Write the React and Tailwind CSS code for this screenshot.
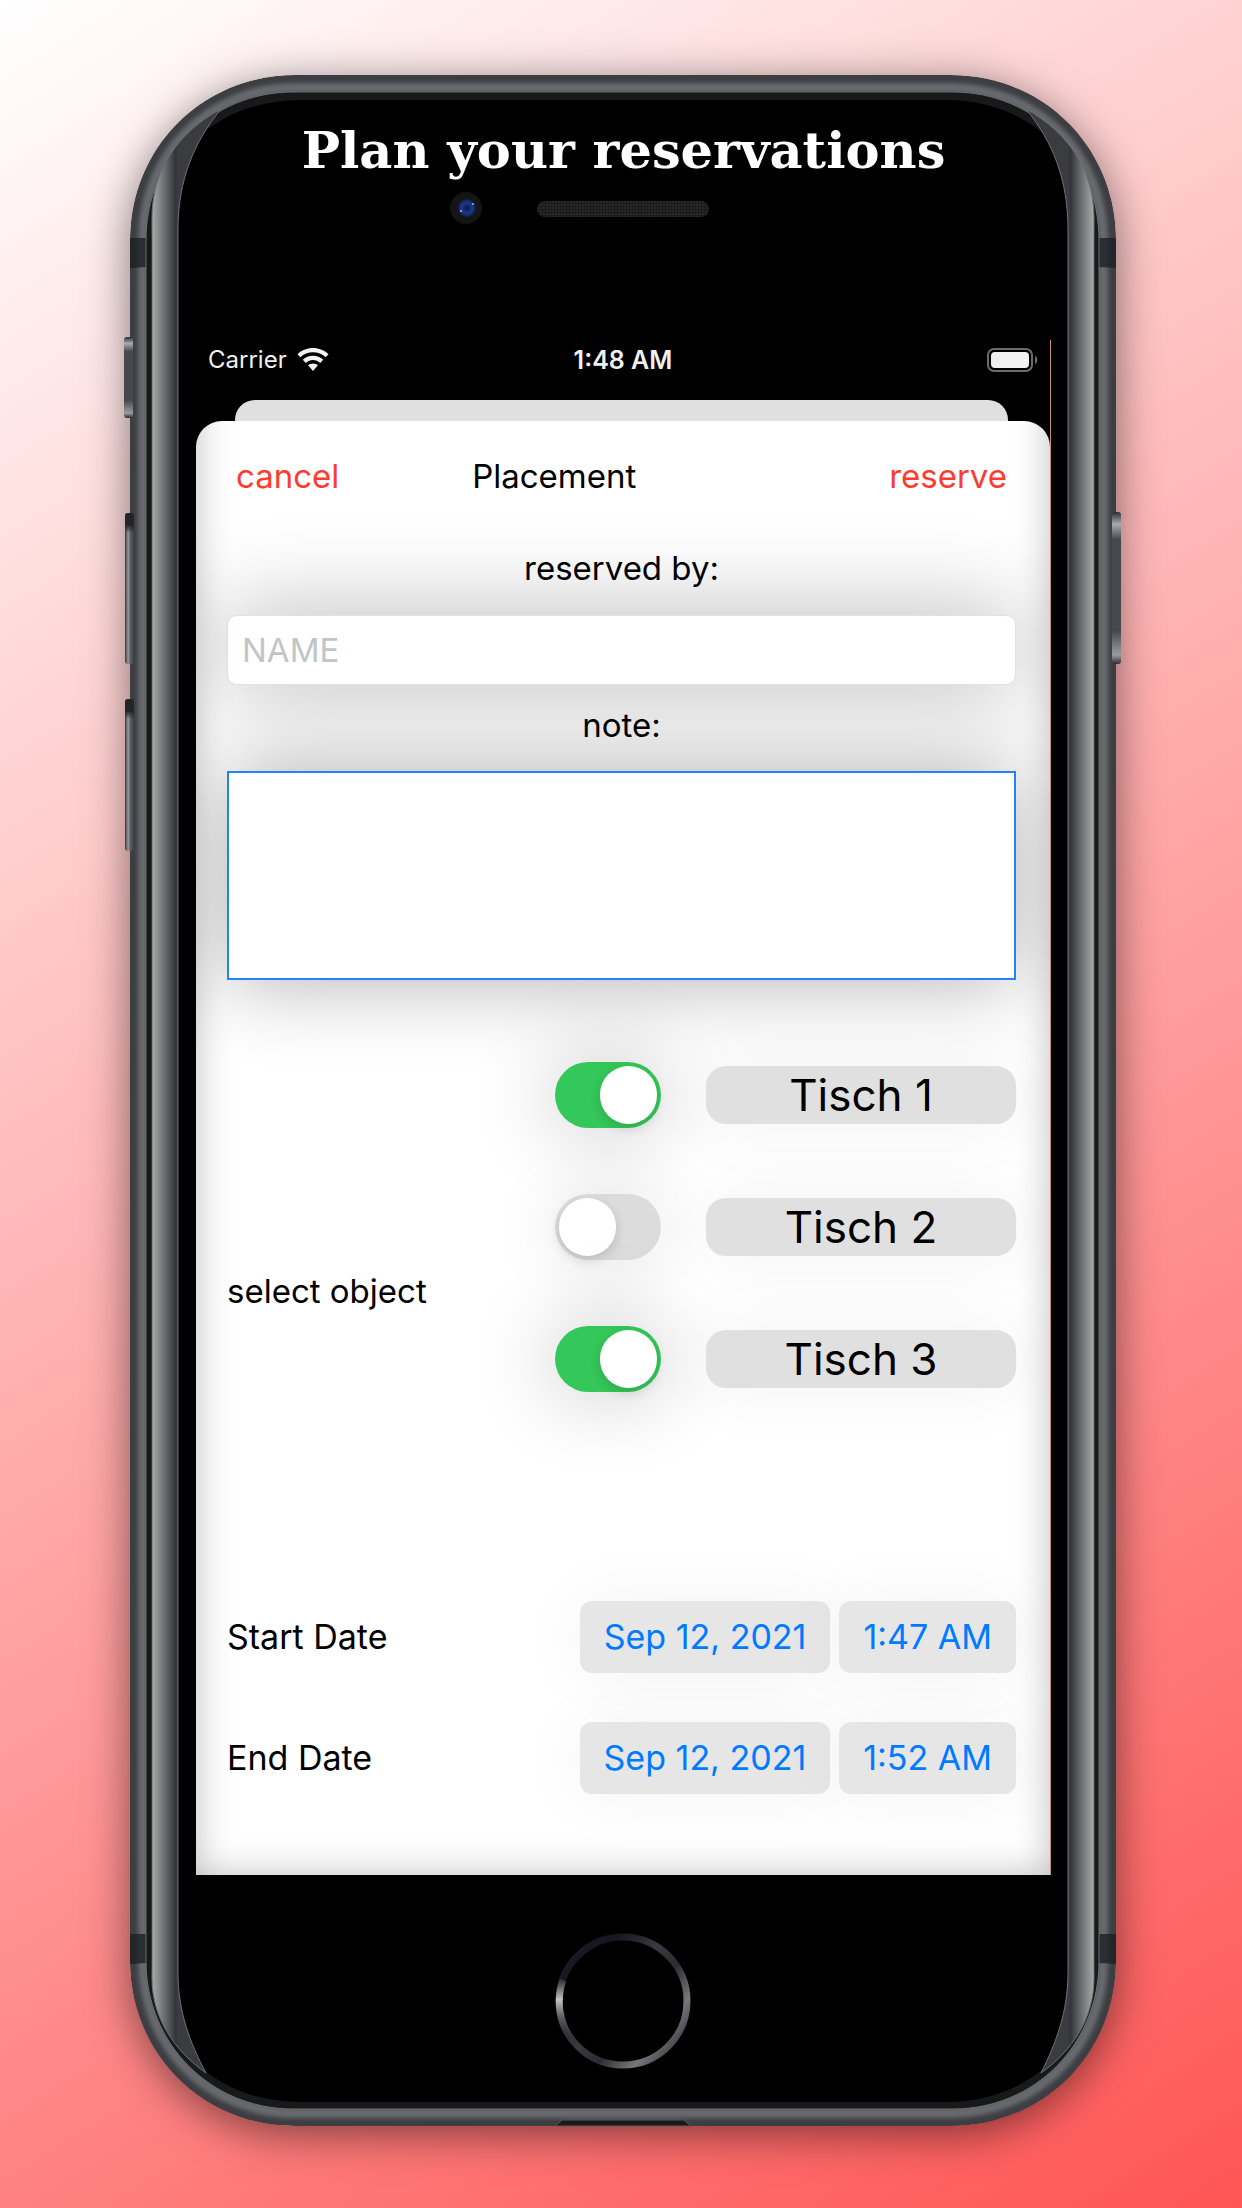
import React, { useState } from "react";

function PhoneBody() {
  return (
    <svg
      className="absolute inset-0 h-full w-full overflow-visible"
      viewBox="130 75 986 2051"
      preserveAspectRatio="none"
      aria-hidden="true"
    >
      <defs>
        <linearGradient id="glassL" x1="152" x2="178" y1="0" y2="0" gradientUnits="userSpaceOnUse">
          <stop offset="0" stopColor="#a9a9a9" />
          <stop offset="0.25" stopColor="#8a8b8b" />
          <stop offset="0.6" stopColor="#5c5e62" />
          <stop offset="0.9" stopColor="#33353a" />
          <stop offset="1" stopColor="#3a3c40" />
        </linearGradient>
        <linearGradient id="glassR" x1="1094" x2="1068" y1="0" y2="0" gradientUnits="userSpaceOnUse">
          <stop offset="0" stopColor="#a9a9a9" />
          <stop offset="0.25" stopColor="#8a8b8b" />
          <stop offset="0.6" stopColor="#5c5e62" />
          <stop offset="0.9" stopColor="#33353a" />
          <stop offset="1" stopColor="#3a3c40" />
        </linearGradient>
        <linearGradient id="key" x1="0" x2="1" y1="0" y2="0">
          <stop offset="0" stopColor="#35373c" />
          <stop offset="0.35" stopColor="#97999b" />
          <stop offset="0.6" stopColor="#5c6066" />
          <stop offset="1" stopColor="#3a3d42" />
        </linearGradient>
        <linearGradient id="keyCap" x1="0" x2="0" y1="0" y2="1">
          <stop offset="0" stopColor="#232529" />
          <stop offset="0.6" stopColor="#232529" />
          <stop offset="1" stopColor="#232529" stopOpacity="0" />
        </linearGradient>
        <linearGradient id="mute" x1="0" x2="0" y1="0" y2="1">
          <stop offset="0" stopColor="#2a2c30" />
          <stop offset="0.08" stopColor="#a9abae" />
          <stop offset="0.18" stopColor="#45484d" />
          <stop offset="0.78" stopColor="#45484d" />
          <stop offset="0.94" stopColor="#9a9ca0" />
          <stop offset="1" stopColor="#2a2c30" />
        </linearGradient>
        <linearGradient id="ring" x1="0" x2="1" y1="0.1" y2="0.9">
          <stop offset="0" stopColor="#1b1c2a" />
          <stop offset="0.22" stopColor="#15161e" />
          <stop offset="0.45" stopColor="#3a3b40" />
          <stop offset="0.62" stopColor="#2c2d32" />
          <stop offset="0.8" stopColor="#76777b" />
          <stop offset="1" stopColor="#2a2b30" />
        </linearGradient>
        <linearGradient id="ringGlow" x1="0" x2="0" y1="1976" y2="2044" gradientUnits="userSpaceOnUse">
          <stop offset="0" stopColor="#b8b8b8" stopOpacity="0" />
          <stop offset="0.35" stopColor="#c4c4c4" />
          <stop offset="1" stopColor="#33343a" stopOpacity="0" />
        </linearGradient>
        <radialGradient id="lens">
          <stop offset="0" stopColor="#0a1450" />
          <stop offset="0.6" stopColor="#1c3a86" />
          <stop offset="1" stopColor="#101c44" />
        </radialGradient>
        <pattern id="mesh" width="3" height="3" patternUnits="userSpaceOnUse">
          <rect width="3" height="3" fill="#1b1b1b" />
          <rect width="2" height="2" fill="#292929" />
        </pattern>
        <filter id="soft" x="-5%" y="-5%" width="110%" height="110%">
          <feGaussianBlur stdDeviation="2" />
        </filter>
        <clipPath id="bodyClip">
          <path d="M130 240C130 148 202 75 295 75H951C1044 75 1116 148 1116 240V1961C1116 2053 1044 2126 951 2126H295C202 2126 130 2053 130 1961Z" />
        </clipPath>
      </defs>

      <g clipPath="url(#bodyClip)">
        <path
          fill="#3c3e42"
          d="M130 240C130 148 202 75 295 75H951C1044 75 1116 148 1116 240V1961C1116 2053 1044 2126 951 2126H295C202 2126 130 2053 130 1961Z"
        />
        <path
          fill="none"
          stroke="#68696d"
          strokeWidth="10"
          filter="url(#soft)"
          d="M143 240C143 155 209 88 295 88H951C1037 88 1103 155 1103 240V1961C1103 2046 1037 2113 951 2113H295C209 2113 143 2046 143 1961Z"
        />
        <path fill="#1b2024" fillOpacity="0.8" d="M130 238h17v29l-17 1zM1116 238h-17v29l17 1zM130 1934h17v29l-17 1zM1116 1934h-17v29l17 1z" />
      </g>
      <rect x="124" y="337" width="9" height="81" rx="3" fill="url(#mute)" />
      <rect x="125" y="513" width="9" height="151" rx="3" fill="url(#key)" />
      <rect x="125" y="513" width="9" height="20" rx="3" fill="url(#keyCap)" />
      <rect x="125" y="699" width="9" height="152" rx="3" fill="url(#key)" />
      <rect x="125" y="699" width="9" height="20" rx="3" fill="url(#keyCap)" />
      <rect x="1112" y="512" width="9" height="152" rx="3" fill="url(#mute)" />

      <path
        fill="#17191b"
        stroke="#6d6e71"
        d="M146 240C146 157 211 92 293 92H953C1035 92 1099 157 1099 240V1961C1099 2044 1035 2109 953 2109H293C211 2109 146 2044 146 1961Z"
      />
      <path
        fill="#000"
        d="M151 246C151 160 216 100 300 100H946C1030 100 1095 160 1095 246V1958C1095 2042 1030 2102 946 2102H300C216 2102 151 2042 151 1958Z"
      />
      <path fill="url(#glassL)" stroke="#6f7073" strokeWidth="1" d="M221 109C178 132 152 170 152 218V1978C152 2018 174 2050 206 2073C190 2043 178 2012 178 1972V230C178 180 194 142 221 109Z" />
      <path fill="url(#glassR)" stroke="#6f7073" strokeWidth="1" d="M1026 109C1068 132 1094 170 1094 218V1978C1094 2018 1073 2050 1041 2073C1056 2043 1068 2012 1068 1972V230C1068 180 1053 142 1026 109Z" />

      <circle cx="466" cy="208" r="16" fill="#151515" />
      <circle cx="467" cy="208" r="9" fill="url(#lens)" />
      <circle cx="473" cy="204" r="1" fill="#7fc0e4" />
      <circle cx="461" cy="211" r="1" fill="#a9cdea" />
      <rect x="537" y="201" width="172" height="16" rx="8" fill="url(#mesh)" />

      <circle cx="623" cy="2001" r="64" fill="none" stroke="url(#ring)" strokeWidth="7" />
      <path d="M563 1980A64 64 0 0 0 572 2040" fill="none" stroke="url(#ringGlow)" strokeWidth="7" />
      <path d="M555 2126L562 2120H684L691 2126Z" fill="#1a1a1a" stroke="#5a5b5e" strokeWidth="1" />
    </svg>
  );
}

function WifiIcon() {
  return (
    <svg className="h-6 w-8" viewBox="0 0 32 24" aria-hidden="true" fill="#f2f2f2">
      <path d="M16 0C22 0 27.500 2.300 31.500 6.200L28.600 9.300C25.200 6 20.800 4.300 16 4.300S6.800 6 3.400 9.300L.5 6.200C4.500 2.300 10 0 16 0Z" />
      <path d="M16 7.800C19.900 7.800 23.500 9.200 26.200 11.800L23.200 14.900C21.200 13 18.700 12 16 12S10.800 13 8.800 14.900L5.800 11.800C8.500 9.200 12.100 7.800 16 7.800Z" />
      <path d="M16 15.400C17.900 15.400 19.600 16.100 20.900 17.300L16 23L11.100 17.300C12.400 16.100 14.100 15.400 16 15.400Z" />
    </svg>
  );
}

function BatteryIcon() {
  return (
    <svg className="h-6 w-[51px]" viewBox="0 0 51 24" aria-hidden="true">
      <rect x="1" y="1" width="44" height="22" rx="6" fill="none" stroke="#6b6b6b" strokeWidth="2" />
      <rect x="4" y="4" width="38" height="16" rx="4" fill="#f0f0f0" />
      <path d="M48 8C51 9 51 15 48 16Z" fill="#6b6b6b" />
    </svg>
  );
}

const TABLES = [
  { id: "tisch-1", name: "Tisch 1", on: true },
  { id: "tisch-2", name: "Tisch 2", on: false },
  { id: "tisch-3", name: "Tisch 3", on: true },
];

const DATES = [
  { id: "start", label: "Start Date", date: "Sep 12, 2021", time: "1:47 AM" },
  { id: "end", label: "End Date", date: "Sep 12, 2021", time: "1:52 AM" },
];

function TableRow({ id, name, on }) {
  const [checked, setChecked] = useState(on);
  return (
    <div className="flex h-[66px] items-center gap-[45px]">
      <input
        id={id}
        type="checkbox"
        role="switch"
        checked={checked}
        onChange={(e) => setChecked(e.target.checked)}
        className="flex h-[66px] w-[106px] shrink-0 appearance-none items-center rounded-full bg-[#dcdcdc] px-1 shadow-[0_0_70px_rgba(0,0,0,0.12)] before:h-[58px] before:w-[57px] before:rounded-full before:bg-white before:shadow-[0_4px_12px_rgba(0,0,0,0.15)] checked:justify-end checked:bg-[#34c759] checked:shadow-[0_0_80px_8px_rgba(0,0,0,0.18)]"
      />
      <label
        htmlFor={id}
        className="flex h-[58px] flex-1 items-center justify-center rounded-[20px] bg-[#e0e0e0] text-[44px] leading-none shadow-[0_0_70px_rgba(0,0,0,0.06)]"
      >
        {name}
      </label>
    </div>
  );
}

function DateRow({ id, label, date, time }) {
  return (
    <div role="group" aria-labelledby={id} className="flex h-[72px] items-center justify-between text-[34px]">
      <span id={id}>{label}</span>
      <div className="flex gap-[9px] text-[#007aff]">
        <button type="button" className="h-[72px] rounded-xl bg-[#e6e6e6] px-6 shadow-[0_0_70px_rgba(0,0,0,0.05)]">
          {date}
        </button>
        <button type="button" className="h-[72px] rounded-xl bg-[#e6e6e6] px-6 shadow-[0_0_70px_rgba(0,0,0,0.05)]">
          {time}
        </button>
      </div>
    </div>
  );
}

export default function App() {
  return (
    <main className="min-h-screen bg-[linear-gradient(148deg,#ffffff_0%,#ff5555_100%)] pt-[75px] pr-[126px] pb-[82px] pl-[130px] font-[Inter,sans-serif] text-black">
      <div className="relative rounded-[165px] shadow-[0_8px_44px_rgba(0,0,0,0.5)]">
        <PhoneBody />
        <div className="relative pr-[65px] pb-[251px] pl-[66px]">
          <h1 className="flex h-[265px] justify-center pt-10 font-['DejaVu_Serif',serif] text-[51px] leading-[70px] font-bold whitespace-nowrap text-white">
            Plan your reservations
          </h1>

          <div className="border-r border-[#c98787]">
            <header className="grid h-[60px] grid-cols-3 items-start px-3 text-[25px] leading-10 text-[#f0f0f0]">
              <div className="flex items-center gap-[10px]">
                <span className="text-[24px]">Carrier</span>
                <WifiIcon />
              </div>
              <time className="text-center font-semibold">1:48 AM</time>
              <div className="flex h-10 items-center justify-end">
                <BatteryIcon />
              </div>
            </header>
            <div className="mr-[42px] ml-[39px] h-[21px] rounded-t-[20px] bg-[#e0e0e0]" />

            <form
              onSubmit={(e) => e.preventDefault()}
              className="relative overflow-hidden rounded-t-[26px] bg-white pr-[34px] pb-[81px] pl-[31px] text-[33px] leading-[50px]"
            >
              <div className="flex items-center justify-between px-[9px] pt-[30px] text-[#ff3b30]">
                <button type="button">cancel</button>
                <h2 className="mr-[120px] text-black">Placement</h2>
                <button type="submit">reserve</button>
              </div>

              <label htmlFor="name" className="relative z-10 block pt-[42px] text-center">
                reserved by:
              </label>
              <input
                id="name"
                placeholder="NAME"
                className="mt-[22px] block h-[70px] w-full rounded-[10px] border border-[#e2e2e2] bg-white px-[14px] shadow-[0_0_90px_4px_rgba(0,0,0,0.27)] outline-none placeholder:text-[#c4c4c6]"
              />
              <label htmlFor="note" className="relative z-10 block pt-[15px] text-center">
                note:
              </label>
              <textarea
                id="note"
                className="relative mt-[21px] block h-[209px] w-full resize-none border-2 border-[#2384f5] bg-white p-3 shadow-[0_0_84px_rgba(0,0,0,0.32)] outline-none"
              />

              <div role="group" aria-labelledby="objects" className="mt-[82px] flex items-center justify-between">
                <span id="objects" className="pt-[128px]">
                  select object
                </span>
                <div className="flex w-[461px] flex-col gap-[66px]">
                  {TABLES.map((t) => (
                    <TableRow key={t.id} {...t} />
                  ))}
                </div>
              </div>

              <div className="mt-[209px] flex flex-col gap-[49px]">
                {DATES.map((d) => (
                  <DateRow key={d.id} {...d} />
                ))}
              </div>
              <div className="pointer-events-none absolute inset-x-0 -top-20 bottom-0 shadow-[inset_0_0_36px_rgba(0,0,0,0.26)]" />
            </form>
          </div>
        </div>
      </div>
    </main>
  );
}
